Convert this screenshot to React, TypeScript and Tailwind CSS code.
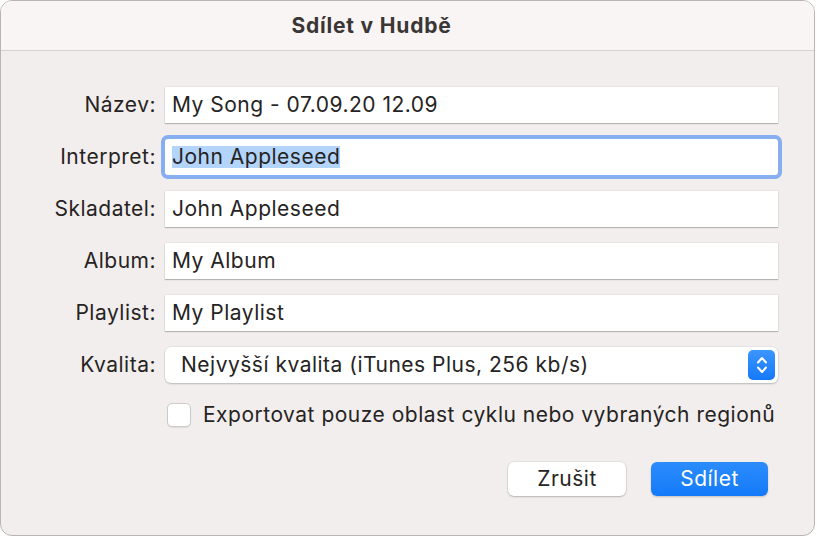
import React from "react";

const fields = [
  { label: "Název:", value: "My Song - 07.09.20 12.09" },
  { label: "Interpret:", value: "John Appleseed", focused: true },
  { label: "Skladatel:", value: "John Appleseed" },
  { label: "Album:", value: "My Album" },
  { label: "Playlist:", value: "My Playlist" },
];

const fieldShadow =
  "shadow-[0_0_0_0.5px_rgba(0,0,0,0.07),0_1px_1px_rgba(0,0,0,0.22)]";

export default function App() {
  return (
    <div
      className="w-[817px] h-[537px] bg-white"
      style={{ fontFamily: "Inter, 'Liberation Sans', sans-serif" }}
    >
      <div className="w-[815px] h-[536px] rounded-[12px] border border-[#b9b5b5] bg-[#f3eeee] overflow-hidden flex flex-col">
        {/* Title bar */}
        <div className="h-[50px] shrink-0 bg-[#faf5f5] border-b border-[#d6d1d1] flex items-center justify-center pr-[72px]">
          <span className="text-[21px] tracking-[0.8px] font-bold text-[#3a3636]">Sdílet v Hudbě</span>
        </div>

        {/* Body */}
        <div className="pt-[36px] pr-[36px] text-[21px] tracking-[0.5px] text-[#262323]">
          <div className="grid grid-cols-[155px_1fr] gap-x-[9px] gap-y-4">
            {fields.map((f) => (
              <React.Fragment key={f.label}>
                <div className="h-9 flex items-center justify-end">{f.label}</div>
                <div
                  className={`h-9 flex items-center bg-white px-[7px] ${
                    f.focused
                      ? "rounded-[3px] ring-[4px] ring-[#86aef0]"
                      : fieldShadow
                  }`}
                >
                  {f.focused ? (
                    <span className="bg-[#b3d5fc] leading-[22px]">{f.value}</span>
                  ) : (
                    f.value
                  )}
                </div>
              </React.Fragment>
            ))}

            <div className="h-9 flex items-center justify-end">Kvalita:</div>
            <div className="h-9 flex items-center justify-between bg-white rounded-[6px] pl-[16px] pr-[3px] shadow-[0_0_0_0.5px_rgba(0,0,0,0.08),0_1px_2px_rgba(0,0,0,0.2)]">
              <span>Nejvyšší kvalita (iTunes Plus, 256 kb/s)</span>
              <div className="w-[27px] h-[30px] rounded-[5px] bg-gradient-to-b from-[#3b95fd] to-[#1479f8] flex items-center justify-center">
                <svg width="14" height="22" viewBox="0 0 14 22" fill="none">
                  <path
                    d="M3 8.5 L7 4 L11 8.5"
                    stroke="white"
                    strokeWidth="2"
                    strokeLinecap="round"
                    strokeLinejoin="round"
                  />
                  <path
                    d="M3 13.5 L7 18 L11 13.5"
                    stroke="white"
                    strokeWidth="2"
                    strokeLinecap="round"
                    strokeLinejoin="round"
                  />
                </svg>
              </div>
            </div>
          </div>

          {/* Checkbox */}
          <div className="mt-5 ml-[166px] h-6 flex items-center gap-3 leading-6">
            <div className="w-6 h-6 rounded-[5px] bg-white border border-[#cfcaca] shadow-[0_1px_1px_rgba(0,0,0,0.08)]" />
            <span>Exportovat pouze oblast cyklu nebo vybraných regionů</span>
          </div>

          {/* Buttons */}
          <div className="mt-[35px] pr-[10px] flex justify-end gap-[25px]">
            <button className="w-[118px] h-[34px] rounded-[6px] bg-white shadow-[0_0_0_0.5px_rgba(0,0,0,0.1),0_1px_2px_rgba(0,0,0,0.2)]">
              Zrušit
            </button>
            <button className="w-[117px] h-[34px] rounded-[6px] bg-gradient-to-b from-[#2b8cfd] to-[#137af8] text-white shadow-[0_1px_2px_rgba(0,0,0,0.2)]">
              Sdílet
            </button>
          </div>
        </div>
      </div>
    </div>
  );
}
